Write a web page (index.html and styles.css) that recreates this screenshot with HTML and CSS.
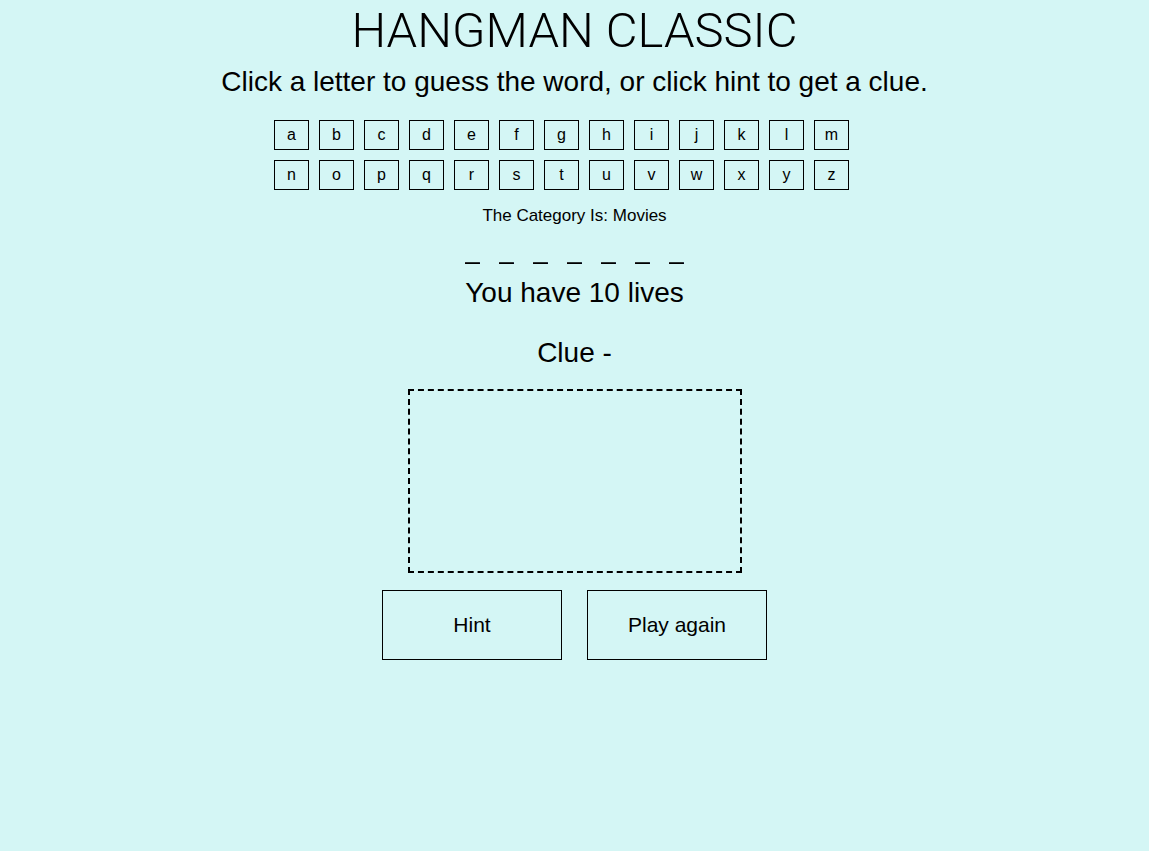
FILE: index.html
```html
<!DOCTYPE html>
<html lang="en">
<head>
<meta charset="utf-8">
<title>Hangman Classic</title>
<link rel="stylesheet" href="styles.css">
</head>
<body>
<main class="game">
  <h1 class="title">HANGMAN CLASSIC</h1>
  <p class="intro">Click a letter to guess the word, or click hint to get a clue.</p>
  <div class="alphabet">
    <button class="key">a</button><button class="key">b</button><button class="key">c</button><button class="key">d</button><button class="key">e</button><button class="key">f</button><button class="key">g</button><button class="key">h</button><button class="key">i</button><button class="key">j</button><button class="key">k</button><button class="key">l</button><button class="key">m</button>
    <button class="key">n</button><button class="key">o</button><button class="key">p</button><button class="key">q</button><button class="key">r</button><button class="key">s</button><button class="key">t</button><button class="key">u</button><button class="key">v</button><button class="key">w</button><button class="key">x</button><button class="key">y</button><button class="key">z</button>
  </div>
  <p class="category">The Category Is: Movies</p>
  <div class="word">
    <span class="blank">_</span><span class="blank">_</span><span class="blank">_</span><span class="blank">_</span><span class="blank">_</span><span class="blank">_</span><span class="blank">_</span>
  </div>
  <p class="lives">You have 10 lives</p>
  <p class="clue">Clue -</p>
  <div class="stage"></div>
  <div class="actions">
    <button class="action">Hint</button>
    <button class="action">Play again</button>
  </div>
</main>
</body>
</html>
```

FILE: styles.css
```css
html, body {
  margin: 0;
  padding: 0;
}

body {
  background: #d4f6f5;
  color: #000;
  font-family: "Liberation Sans", Arial, Helvetica, sans-serif;
  min-height: 851px;
}

.game {
  display: flex;
  flex-direction: column;
  align-items: center;
  text-align: center;
}

.title {
  margin: 0;
  padding-top: 3px;
  font-family: Roboto, "Liberation Sans", sans-serif;
  font-size: 49px;
  font-weight: 300;
  line-height: 56px;
  letter-spacing: 0;
}

.intro {
  margin: 6px 0 0;
  font-size: 28px;
  line-height: 34px;
}

.alphabet {
  margin-top: 21px;
  width: 575px;
  padding-right: 26px;
  display: grid;
  grid-template-columns: repeat(13, 35px);
  column-gap: 10px;
  row-gap: 10px;
}

.key {
  width: 35px;
  height: 30px;
  margin: 0;
  padding: 0;
  background: transparent;
  border: 1px solid #000;
  border-radius: 0;
  font-family: inherit;
  font-size: 16px;
  color: #000;
  line-height: 28px;
}

.category {
  margin: 15px 0 0;
  font-size: 17px;
  line-height: 21px;
}

.word {
  margin: 8px 0 12px;
  display: flex;
  gap: 19px;
  height: 30px;
  font-size: 27px;
  line-height: 30px;
}

.blank {
  display: block;
  width: 15px;
  overflow: hidden;
}

.lives {
  margin: 0;
  font-size: 28px;
  line-height: 34px;
}

.clue {
  margin: 26px 0 0;
  font-size: 28px;
  line-height: 34px;
}

.stage {
  margin-top: 19px;
  width: 330px;
  height: 180px;
  border: 2px dashed #000;
}

.actions {
  margin-top: 17px;
  display: flex;
  gap: 25px;
}

.action {
  width: 180px;
  height: 70px;
  margin: 0;
  padding: 0;
  background: transparent;
  border: 1px solid #000;
  border-radius: 0;
  font-family: inherit;
  font-size: 21px;
  color: #000;
}
```
